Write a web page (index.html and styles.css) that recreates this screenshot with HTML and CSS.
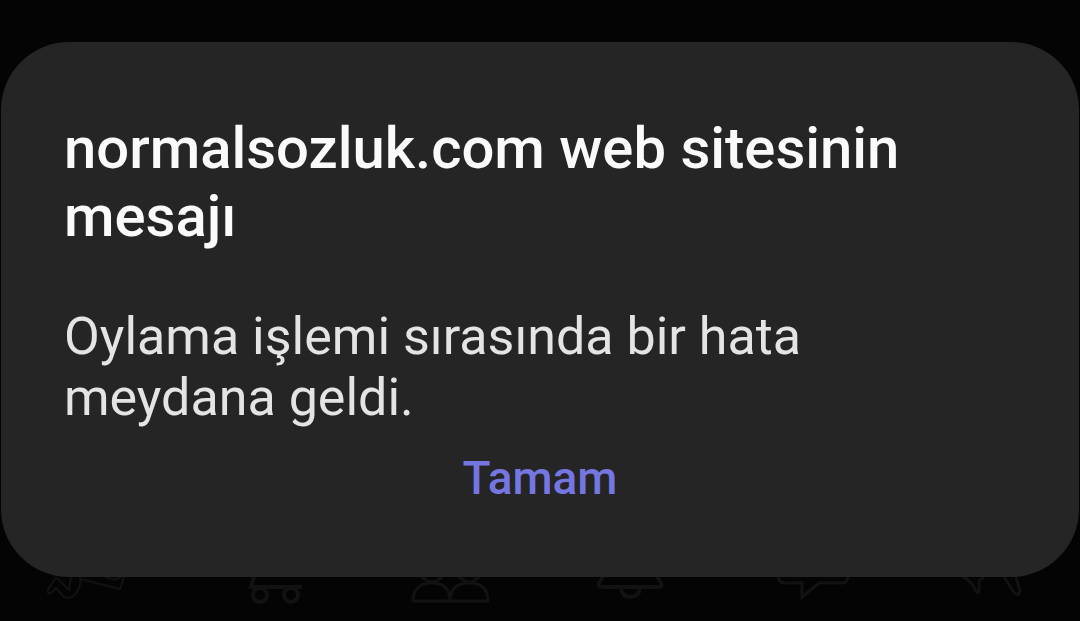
FILE: index.html
```
<!DOCTYPE html>
<html lang="tr">
<head>
  <meta charset="UTF-8" />
  <meta name="viewport" content="width=device-width, initial-scale=1.0" />
  <title>normalsozluk.com</title>
  <link rel="stylesheet" href="styles.css">
</head>
<body>

  <main class="dialog" role="alertdialog" aria-labelledby="baslik" aria-describedby="mesaj">
    <h1 class="dialog_baslik" id="baslik">normalsozluk.com web sitesinin mesajı</h1>
    <p class="dialog_mesaj" id="mesaj">Oylama işlemi sırasında bir hata meydana geldi.</p>
    <button type="button" class="dialog_buton">Tamam</button>
  </main>

  <nav class="alt_menu">
    <a href="#" aria-label="Gündem">
      <svg class="ikon ince" viewBox="0 0 90 30">
        <path d="M26 0 L24 13 L11 0 L3 13 Q2 17 6 16 L11 11 L19 20 Q26 23 31 16 Q37 8 35 0 M35 2 L75 12 L79 0 M60 0 L70 3 L76 0" />
      </svg>
    </a>
    <a href="#" aria-label="Market">
      <svg class="ikon kalin" viewBox="0 0 90 30">
        <path d="M29 0 L26 10 H77" />
        <circle cx="35" cy="18" r="7" />
        <circle cx="66" cy="18" r="7" />
      </svg>
    </a>
    <a href="#" aria-label="Üyeler">
      <svg class="ikon" viewBox="0 0 90 30">
        <path d="M17 0 Q27 10 37 0 M54 0 Q64 10 74 0" />
        <path d="M8 24 Q8 6 27 6 Q45 6 45 24 Q45 6 64 6 Q83 6 83 24 Z" />
      </svg>
    </a>
    <a href="#" aria-label="Bildirimler">
      <svg class="ikon kalin" viewBox="0 0 90 30">
        <path d="M19 -2 L14 6 Q13 10 17 10 H74 Q78 10 76 6 L71 -2 M36 11 Q37 20 45 20 Q54 20 55 11" />
      </svg>
    </a>
    <a href="#" aria-label="Mesajlar">
      <svg class="ikon" viewBox="0 0 90 30">
        <path d="M13 -2 Q13 6 20 6 H37 V20 L54 6 H77 Q83 6 83 -2" />
      </svg>
    </a>
    <a href="#" aria-label="Profil">
      <svg class="ikon" viewBox="0 0 90 30">
        <path d="M18 0 Q26 3 31 14 Q34 18 34 12 V4 L39 0 M59 0 L68 14 Q73 21 75 14 L71 0" />
      </svg>
    </a>
  </nav>

</body>
</html>
```
FILE: styles.css
```
* {
  box-sizing: border-box;
}

body {
  margin: 0;
  padding-top: 42px;
  min-height: 100vh;
  font-family: Roboto, "Noto Sans", sans-serif;
  background-color: #040404;
}

.dialog {
  display: flex;
  flex-direction: column;
  margin: 0 1px;
  padding: 72px 63px 71px;
  background-color: #252525;
  border-radius: 68px;
}

.dialog_baslik {
  margin: 0;
  font-size: 58px;
  font-weight: 500;
  line-height: 68px;
  color: #fafafa;
}

.dialog_mesaj {
  margin: 56px 0 0;
  font-size: 52px;
  line-height: 61px;
  color: #e4e4e4;
}

.dialog_buton {
  align-self: center;
  margin-top: 22px;
  padding: 0;
  border: none;
  background: none;
  font-family: inherit;
  font-size: 46px;
  font-weight: 500;
  line-height: 56px;
  color: #7676e0;
  cursor: pointer;
}

.alt_menu {
  display: grid;
  grid-template-columns: repeat(6, 1fr);
  justify-items: center;
}

.ikon {
  display: block;
  width: 90px;
  height: 30px;
  fill: none;
  stroke: #121212;
  stroke-width: 3px;
}

.ince {
  stroke-width: 2px;
}

.kalin {
  stroke-width: 4px;
}
```
